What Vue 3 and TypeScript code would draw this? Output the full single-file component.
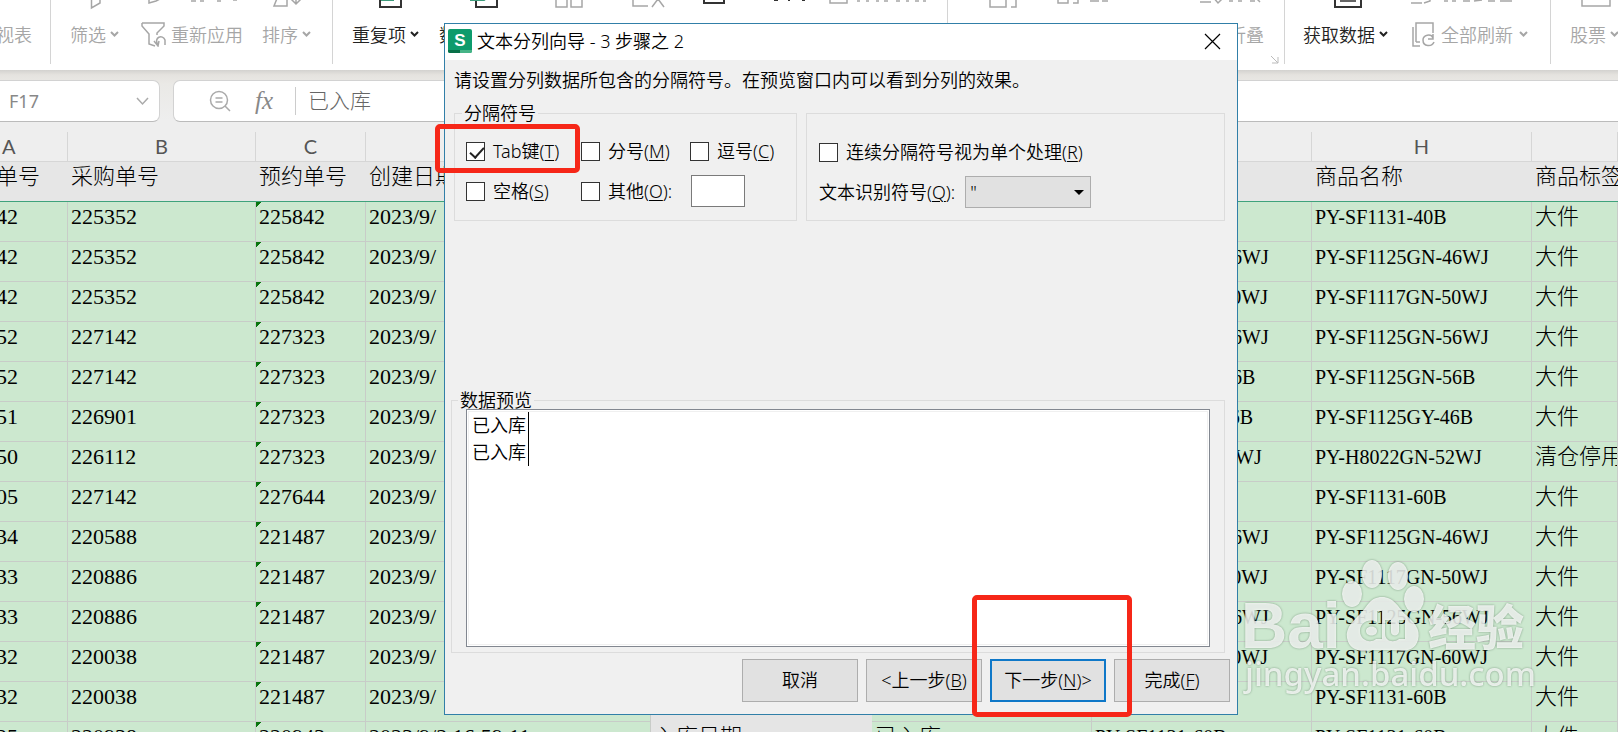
<script setup lang="ts">
import { ref } from 'vue'

interface Row {
  a: string
  b: string
  c: string
  d: string
  code: string
  tag: string
}

const make = (a: string, b: string, c: string, code: string, tag = '大件', d = '2023/9/'): Row => ({ a, b, c, d, code, tag })

const rows: Row[] = [
  make('42', '225352', '225842', 'PY-SF1131-40B'),
  make('42', '225352', '225842', 'PY-SF1125GN-46WJ'),
  make('42', '225352', '225842', 'PY-SF1117GN-50WJ'),
  make('52', '227142', '227323', 'PY-SF1125GN-56WJ'),
  make('52', '227142', '227323', 'PY-SF1125GN-56B'),
  make('51', '226901', '227323', 'PY-SF1125GY-46B'),
  make('50', '226112', '227323', 'PY-H8022GN-52WJ', '清仓停用'),
  make('05', '227142', '227644', 'PY-SF1131-60B'),
  make('34', '220588', '221487', 'PY-SF1125GN-46WJ'),
  make('33', '220886', '221487', 'PY-SF1117GN-50WJ'),
  make('33', '220886', '221487', 'PY-SF1125GN-56WJ'),
  make('32', '220038', '221487', 'PY-SF1117GN-60WJ'),
  make('32', '220038', '221487', 'PY-SF1131-60B'),
  make('25', '220938', '220943', 'PY-SF1131-60B', '大件', '2023/9/2 16:59:11'),
]

const tab = ref(true)
const semicolon = ref(false)
const comma = ref(false)
const space = ref(false)
const other = ref(false)
const merge = ref(false)
const otherText = ref('')
const qualifier = ref('"')
const preview = ['已入库', '已入库']
</script>

<template>
  <div class="app">
    <header class="ribbon">
      <svg class="cut-icons" width="1618" height="25" fill="none" stroke="#a6a6a6" stroke-width="1.5">
        <path d="M91.500 0V8L100 3V0M149 0V3L156 1L160-1M191 1h5M200 1h4M217 1h4M233 0h4" />
        <path d="M278-4L274 6H287V-4M296-4V3M291-1L296 4L301-1" />
        <path d="M556-4V7H567V-4M571-4V7H582V-4M633-4V6H648M652 7L658-1L664 7" />
        <path d="M830-4V3H847V-4M857 1h3M866 1h3M876 1h3M884 1h4M896 1h4M906 1h3M915 1h4M923 1h3" />
        <path d="M990-4V7H1006V-4M1011 7H1016V-4M1058-4V3H1068V-4M1073 3H1078V-4M1090 1h9M1102 1h6M1200 2H1211M1213-3L1218 3L1224-3M1229 1h4M1238 1h4M1250 1h5M1256-2L1260 2" />
        <path d="M1411 3h11M1424 3L1430 1V-3M1444 1h4M1452 1h4M1463 1h7M1474 1L1482 0M1488 1h7M1500 1h12M1582-4V6H1610V-4" />
        <g stroke="#333" stroke-width="2">
          <path d="M380-4V7H401V-4M476-4V7H497V-4M704-4V3H724V-4M774 0h4M788 0h2M802 0h3M1335-4V7H1361V-4" />
          <path d="M1340 1H1356" stroke-width="1.500" />
        </g>
        <path d="M381 0H394M470 0H484L488-3" stroke="#3d9b7b" stroke-width="2" />
      </svg>
      <section class="group g-view"><button class="tool">视表</button></section>
      <section class="group g-sort">
        <button class="tool">筛选<svg class="chev" viewBox="0 0 9 6"><path d="M1 1L4.500 4.500L8 1" /></svg></button>
        <button class="tool reapply">
          <svg class="icon" viewBox="0 0 25 25"><path d="M1 1H23V4L16 11V13M1 1V4L8 12V22L14 24M13 19L17 24L18 19M17 23C12 15 22 12 24 18V23" /></svg>
          重新应用
        </button>
        <button class="tool">排序<svg class="chev" viewBox="0 0 9 6"><path d="M1 1L4.500 4.500L8 1" /></svg></button>
      </section>
      <section class="group g-data">
        <button class="tool on">重复项<svg class="chev" viewBox="0 0 9 6"><path d="M1 1L4.500 4.500L8 1" /></svg></button>
        <button class="tool on">数</button>
      </section>
      <section class="group g-outline">
        <button class="tool">折叠</button>
        <svg class="corner" viewBox="0 0 9 9"><path d="M1 1L8 8M8 2V8H2" /></svg>
      </section>
      <section class="group g-fetch">
        <button class="tool on">获取数据<svg class="chev" viewBox="0 0 9 6"><path d="M1 1L4.500 4.500L8 1" /></svg></button>
        <button class="tool refresh">
          <svg class="icon" viewBox="0 0 25 25"><path d="M2 5V24H9M5 20V1H22V11M5 20H9M22 12V17H17M22 16C20 11 12 13 12 18C12 25 21 25 23 20" /></svg>
          全部刷新<svg class="chev wide" viewBox="0 0 9 6"><path d="M1 1L4.500 4.500L8 1" /></svg>
        </button>
      </section>
      <section class="group g-stock">
        <button class="tool">股票<svg class="chev" viewBox="0 0 9 6"><path d="M1 1L4.500 4.500L8 1" /></svg></button>
      </section>
    </header>

    <div class="formula">
      <div class="namebox">
        <span>F17</span>
        <svg width="13" height="9" viewBox="0 0 13 9"><path d="M1 1L6.500 7L12 1" /></svg>
      </div>
      <div class="fx">
        <svg width="22" height="22" viewBox="0 0 22 22"><circle cx="10" cy="10" r="8.500" /><path d="M6.500 8H13.500M6.500 12H13.500M16 16L21 21" /></svg>
        <i>fx</i>
        <span class="content">已入库</span>
      </div>
    </div>

    <table class="sheet">
      <colgroup>
        <col class="w-a" /><col class="w-b" /><col class="w-c" /><col class="w-d" /><col class="w-e" />
        <col class="w-f" /><col class="w-f" /><col class="w-f" /><col />
      </colgroup>
      <thead>
        <tr class="letters">
          <th>A</th><th>B</th><th>C</th><th></th><th></th><th></th><th></th><th>H</th><th></th>
        </tr>
        <tr class="titles">
          <th><span>单号</span></th><th>采购单号</th><th>预约单号</th><th>创建日期</th><th></th><th></th><th></th><th>商品名称</th><th>商品标签</th>
        </tr>
      </thead>
      <tbody>
        <tr v-for="(r, i) in rows" :key="i">
          <td><span>{{ r.a }}</span></td>
          <td>{{ r.b }}</td>
          <td class="flag">{{ r.c }}</td>
          <td>{{ r.d }}</td>
          <td class="label"><template v-if="i === 13">入库日期</template></td>
          <td><template v-if="i === 13">已入库</template></td>
          <td class="code">{{ r.code }}</td>
          <td class="code">{{ r.code }}</td>
          <td>{{ r.tag }}</td>
        </tr>
      </tbody>
    </table>

    <svg class="watermark" width="300" height="150" viewBox="0 0 300 150">
      <g class="mark">
        <ellipse cx="116" cy="38" rx="10" ry="13" />
        <ellipse cx="136" cy="18" rx="10" ry="14" />
        <ellipse cx="162" cy="20" rx="10" ry="14" />
        <ellipse cx="178" cy="43" rx="10" ry="13" />
        <path fill-rule="evenodd" d="M146 41C158 41 162 51 169 58C178 66 185 73 182 84C179 95 168 96 158 94H136C125 97 113 94 111 82C109 72 118 64 124 58C132 50 134 41 146 41ZM141 55V66C132 62 124 67 124 75C124 84 134 88 140 83H146V55ZM141 75C141 81 130 81 130 75C130 69 141 69 141 75ZM149 64V77C149 86 158 87 163 83H169V64H163V76C162 81 155 80 155 76V64Z" />
        <text x="5" y="92" class="latin">Bai</text>
        <text x="192" y="89" class="han">经验</text>
        <text x="9" y="110" class="site" dy="20">jingyan.baidu.com</text>
      </g>
    </svg>

    <main class="dialog" role="dialog" aria-label="文本分列向导">
      <div class="titlebar">
        <svg class="logo" viewBox="0 0 24 24">
          <rect width="24" height="24" rx="2" fill="#0e9b6c" />
          <path d="M0 21H12V24H2Q0 24 0 22Z" fill="#087048" />
          <path d="M12 21H24V22Q24 24 22 24H12Z" fill="#46b487" />
          <text x="12" y="17" text-anchor="middle">S</text>
        </svg>
        <h1>文本分列向导 - 3 步骤之 2</h1>
        <button class="close" aria-label="关闭"><svg width="17" height="17" viewBox="0 0 17 17"><path d="M1 1L16 16M16 1L1 16" /></svg></button>
      </div>
      <div class="body">
        <p>请设置分列数据所包含的分隔符号。在预览窗口内可以看到分列的效果。</p>
        <div class="options">
          <fieldset class="delims">
            <legend>分隔符号</legend>
            <label><input v-model="tab" type="checkbox" /><span>Tab键(<u>T</u>)</span></label>
            <label><input v-model="semicolon" type="checkbox" /><span>分号(<u>M</u>)</span></label>
            <label><input v-model="comma" type="checkbox" /><span>逗号(<u>C</u>)</span></label>
            <label><input v-model="space" type="checkbox" /><span>空格(<u>S</u>)</span></label>
            <label><input v-model="other" type="checkbox" /><span>其他(<u>O</u>):</span></label>
            <input v-model="otherText" class="other" type="text" aria-label="其他" />
          </fieldset>
          <fieldset class="quals">
            <label><input v-model="merge" type="checkbox" /><span>连续分隔符号视为单个处理(<u>R</u>)</span></label>
            <div class="qrow">
              <label for="qualifier"><span>文本识别符号(<u>Q</u>):</span></label>
              <span class="pick">
                <select id="qualifier" v-model="qualifier"><option value="&quot;">"</option></select>
                <svg width="10" height="5" viewBox="0 0 10 5"><path d="M0 0H10L5 5Z" /></svg>
              </span>
            </div>
          </fieldset>
        </div>
        <fieldset class="preview">
          <legend>数据预览</legend>
          <div class="pane">
            <div class="lines"><div v-for="(t, i) in preview" :key="i">{{ t }}</div></div>
          </div>
        </fieldset>
        <div class="actions">
          <button>取消</button>
          <button>&lt;上一步(<u>B</u>)</button>
          <button class="primary">下一步(<u>N</u>)&gt;</button>
          <button>完成(<u>F</u>)</button>
        </div>
      </div>
    </main>
    <div class="hl hl-tab"></div>
    <div class="hl hl-next"></div>
  </div>
</template>

<style>
body { margin: 0; }
</style>

<style scoped>
* { box-sizing: border-box; }
.app {
  position: relative; height: 100vh; overflow: hidden; background: #eee; color: #000;
  font: 18px/24px "Noto Sans", "Noto Sans CJK SC", sans-serif;
}
button { font: inherit; color: inherit; }
svg { flex: none; }

.ribbon {
  position: relative; z-index: 1; display: flex; height: 70px; overflow: hidden; background: #fff;
}
.cut-icons { position: absolute; left: 0; top: 0; }
.group { display: flex; align-items: center; height: 64px; padding-top: 4px; border-right: 1px solid #d4d4d4; flex: none; }
.tool {
  display: flex; align-items: center; padding: 0; border: 0; background: none; color: #a6a6a6; white-space: nowrap;
  font-family: "Noto Sans CJK SC", sans-serif; font-weight: 350;
}
.tool.on { color: #222; }
.chev { width: 9px; height: 6px; margin-left: 4px; fill: none; stroke: currentColor; stroke-width: 2; }
.chev.wide { margin-left: 6px; }
.icon { width: 25px; height: 25px; margin-right: 5px; fill: none; stroke: currentColor; stroke-width: 1.500; }
.g-view { width: 51px; justify-content: flex-end; padding-right: 18px; }
.g-sort { width: 282px; padding-left: 19px; }
.reapply { margin: 0 19px 0 22px; }
.g-data { width: 615px; padding-left: 19px; gap: 20px; }
.g-outline { width: 337px; justify-content: flex-end; padding-right: 5px; }
.corner { width: 9px; height: 9px; margin-left: 6px; align-self: flex-end; fill: none; stroke: #bbb; }
.g-fetch { width: 266px; padding-left: 18px; gap: 23px; }
.g-stock { flex: 1; border: 0; padding-left: 19px; }

.formula {
  display: flex; gap: 13px; height: 62px; padding: 10px 0;
  background: linear-gradient(#d3d2cf, #e5e3df 5px, #eae9e6 14px, #eee 50px);
}
.namebox, .fx { display: flex; align-items: center; height: 42px; background: #fff; border: 1px solid #d2d2d2; border-bottom-color: #bbb; color: #888; }
.namebox { width: 160px; padding: 0 10px 0 9px; justify-content: space-between; border-left: 0; border-radius: 0 7px 7px 0; }
.namebox svg, .fx svg { fill: none; stroke: #aaa; stroke-width: 1.500; }
.fx { flex: 1; padding-left: 35px; border-right: 0; border-radius: 7px 0 0 7px; }
.fx i { width: 22px; margin: 0 18px 0 24px; font: italic 25px/32px "Liberation Serif", serif; }
.content { padding: 0 12px 4px; border-left: 1px solid #ccc; font: 300 21px/24px "Noto Sans CJK SC", sans-serif; color: #666; }

.sheet { width: 100%; table-layout: fixed; border-collapse: separate; border-spacing: 0; }
.w-a { width: 68px; } .w-b { width: 188px; } .w-c { width: 110px; } .w-d { width: 285px; } .w-e { width: 221px; } .w-f { width: 220px; }
.sheet th, .sheet td {
  height: 40px; padding: 3px 0 0 3px; overflow: hidden; text-align: left; vertical-align: top; white-space: nowrap;
  border-right: 1px solid #c8ccc8; border-bottom: 1px solid #c8ccc8; font: 300 22px/24px "Liberation Serif", "Noto Sans CJK SC", serif;
}
.sheet td { background: #cce8cf; }
.sheet .code { font-size: 20px; }
.sheet td span, .titles span { margin-left: -7px; }
.sheet .letters th { height: 30px; padding: 2px 0 0; text-align: center; border-color: #d6d6d6; font: 20px/24px Lato, sans-serif; color: #555; background: #eee; }
.sheet .letters th:first-child { text-align: left; padding-left: 2px; }
.sheet .titles th { background: #e6e6e6; border-right: 0; border-bottom-color: #3fa27c; }
.sheet td.label { background: #e5e5e5; border-color: #e5e5e5; }
.sheet td.flag { background: linear-gradient(135deg, #08750e 4px, transparent 4px) #cce8cf; }

.watermark { position: absolute; left: 1236px; top: 556px; z-index: 1; filter: drop-shadow(0 0 1px rgba(70, 100, 75, .7)); }
.mark { fill: #fff; opacity: .78; }
.latin { font: bold 64px "Liberation Sans", sans-serif; }
.han { font: 900 48px "Noto Sans CJK SC", sans-serif; }
.site { font: 500 33px "Noto Sans", sans-serif; }

.dialog { position: absolute; left: 444px; top: 23px; z-index: 2; width: 794px; background: #f0f0f0; border: 1px solid #317fa8; }
.titlebar { display: flex; align-items: center; height: 36px; padding: 0 16px 2px 3px; background: #fff; }
.logo { width: 24px; height: 24px; }
.logo text { font: bold 17px "Liberation Sans", sans-serif; fill: #fff; }
h1 { flex: 1; margin: 0 0 0 5px; font: inherit; font-weight: 350; }
.close { display: flex; padding: 0; border: 0; background: none; }
.close svg { fill: none; stroke: #000; stroke-width: 1.200; }
.body { padding: 8px 7px 12px 9px; font-weight: 350; }
.body p { margin: 0 0 9px; white-space: nowrap; }
fieldset { margin: 0; min-width: 0; border: 1px solid #dcdcdc; }
legend { height: 24px; padding: 0 2px; }
.options { display: flex; gap: 9px; align-items: flex-end; padding-right: 5px; }
.delims { display: grid; grid-template-columns: 115px 109px auto; grid-auto-rows: 32px; row-gap: 8px; width: 343px; height: 120px; padding: 10px 11px 0; }
.delims legend { margin-left: -4px; }
.quals { display: flex; flex-direction: column; gap: 8px; flex: 1; height: 108px; padding: 22px 12px 0; }
label { display: flex; align-items: center; gap: 8px; height: 32px; white-space: nowrap; }
input[type="checkbox"] { position: relative; flex: none; width: 19px; height: 19px; margin: 0; appearance: none; background: #fff; border: 1px solid #333; }
input[type="checkbox"]:checked::after { content: ""; position: absolute; left: 6px; top: 1px; width: 6px; height: 12px; border: solid #222; border-width: 0 2px 2px 0; transform: rotate(42deg); }
u { text-underline-offset: 2px; text-decoration-thickness: 1px; }
.other { width: 54px; height: 32px; margin-left: 1px; padding: 0 4px; font: inherit; background: #fff; border: 1px solid #7a7a7a; }
.qrow { display: flex; align-items: center; gap: 10px; }
.pick { position: relative; }
.pick svg { position: absolute; right: 7px; top: 14px; pointer-events: none; }
select { display: block; width: 126px; height: 32px; padding: 0 4px; appearance: none; font: inherit; color: #000; background: #e1e1e1; border: 1px solid #adadad; border-radius: 0; }
.preview { margin: 167px 5px 0 -3px; padding: 0 14px 7px; height: 265px; }
.preview legend { margin-left: -8px; }
.pane { height: 238px; margin-top: -3px; padding: 2px; background: #fff; border: 1px solid #828790; outline: 1px solid #f0f0f0; outline-offset: -3px; position: relative; }
.lines { display: inline-block; padding: 0 2px 0 3px; border-right: 1px solid #000; line-height: 27px; }
.actions { display: flex; justify-content: flex-end; gap: 8px; margin-top: 6px; }
.actions button { width: 116px; height: 43px; padding: 0 0 2px; background: #e1e1e1; border: 1px solid #adadad; white-space: nowrap; font-weight: 350; }
.actions .primary { border: 2px solid #0f78c8; }

.hl { position: absolute; z-index: 3; border: 5px solid #f62718; border-radius: 5px; pointer-events: none; }
.hl-tab { left: 435px; top: 124px; width: 145px; height: 49px; }
.hl-next { left: 972px; top: 595px; width: 160px; height: 122px; }
</style>
